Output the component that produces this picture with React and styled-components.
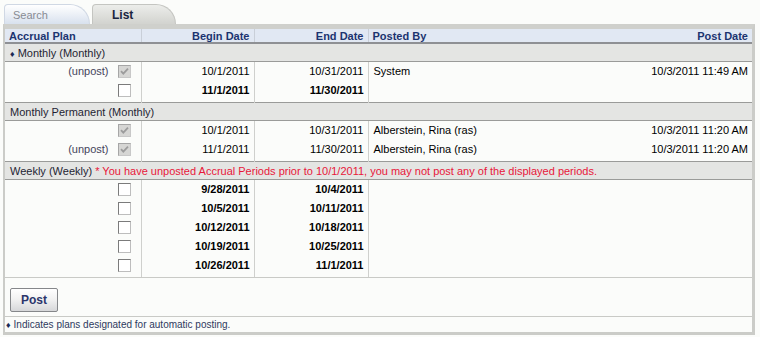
import React from "react";
import styled, { createGlobalStyle } from "styled-components";

const Global = createGlobalStyle`
  html, body { margin: 0; padding: 0; background: #fbfcfa; }
  body { font-family: "Liberation Sans", Arial, sans-serif; font-size: 11px; color: #000; }
`;

const Page = styled.div`
  width: 760px;
  height: 337px;
  padding: 4px 5px 0 3px;
  box-sizing: border-box;
`;

const TabStrip = styled.div`
  display: flex;
  gap: 2px;
  height: 20px;
  padding-left: 1px;
  align-items: flex-end;
`;

const Tab = styled.div`
  height: 20px;
  box-sizing: border-box;
  width: ${(p) => (p.$active ? "84px" : "86px")};
  border-radius: 4px 20px 0 0 / 4px 20px 0 0;
  display: flex;
  align-items: center;
  font-size: ${(p) => (p.$active ? "12px" : "11px")};
  font-weight: ${(p) => (p.$active ? "bold" : "normal")};
  color: ${(p) => (p.$active ? "#1a2440" : "#878b93")};
  padding-left: ${(p) => (p.$active ? "19px" : "8px")};
  background: ${(p) =>
    p.$active
      ? "linear-gradient(#ecedea, #d2d3cf)"
      : "linear-gradient(#ffffff, #d8e1ee)"};
  border: 1px solid ${(p) => (p.$active ? "#c4c5c1" : "#d0d8e4")};
  border-bottom: none;
`;

const Panel = styled.div`
  border: 2px solid #cbccc8;
  border-top: 5px solid #cfd0cc;
  border-right-width: 3px;
  border-bottom-width: 3px;
  background: #fbfcfa;
`;

const Table = styled.table`
  width: 100%;
  border-collapse: collapse;
  table-layout: fixed;
`;

const Head = styled.th`
  height: 13px;
  padding: 0 ${(p) => (p.$align === "right" ? "4px" : "0")} 0 ${(p) => (p.$align === "right" ? "0" : "4px")};
  background: #e1e8f3;
  color: #1b3470;
  font-weight: bold;
  font-size: 11px;
  text-align: ${(p) => p.$align || "left"};
  border-bottom: 2px solid #8e9094;
  border-left: ${(p) => (p.$divider ? "1px solid #c9cfd8" : "none")};
  white-space: nowrap;
`;

const GroupCell = styled.td`
  height: 17px;
  padding: 0 0 0 5px;
  background: #e4e5e3;
  border-top: 1px solid #9a9b99;
  border-bottom: 1px solid #9a9b99;
  color: #1f1f33;
  white-space: nowrap;
`;

const Warn = styled.span`
  color: #e8173a;
`;

const Cell = styled.td`
  height: 18px;
  padding: 0 ${(p) => (p.$align === "right" ? "4px" : "0")} 1px ${(p) => (p.$align === "right" ? "0" : "5px")};
  text-align: ${(p) => p.$align || "left"};
  font-weight: ${(p) => (p.$bold ? "bold" : "normal")};
  border-right: ${(p) => (p.$divider ? "1px solid #cfd0cd" : "none")};
  white-space: nowrap;
  vertical-align: middle;
  line-height: 13px;
`;

const PlanCell = styled(Cell)`
  padding-right: 10px;
`;

const PlanInner = styled.div`
  display: flex;
  justify-content: flex-end;
  align-items: center;
  gap: 9px;
`;

const Unpost = styled.span`
  color: #45455a;
`;

const Box = styled.span`
  display: inline-flex;
  align-items: center;
  justify-content: center;
  width: 13px;
  height: 13px;
  box-sizing: border-box;
  border: 1px solid ${(p) => (p.$disabled ? "#a6a6a6" : "#7b7b7b")};
  border-right-color: ${(p) => (p.$disabled ? "#c8c8c8" : "#bdbdbd")};
  border-bottom-color: ${(p) => (p.$disabled ? "#c8c8c8" : "#bdbdbd")};
  background: ${(p) => (p.$disabled ? "#d6d6d4" : "#ffffff")};
`;

const SpacerRow = styled.td`
  height: 2px;
  padding: 0;
  border-right: ${(p) => (p.$divider ? "1px solid #cfd0cd" : "none")};
`;

const ActionBar = styled.div`
  border-top: 1px solid #c9cac6;
  border-bottom: 1px solid #c9cac6;
  height: 40px;
  box-sizing: border-box;
  padding: 10px 0 0 5px;
`;

const Button = styled.button`
  width: 48px;
  height: 24px;
  border: 1px solid #85878a;
  border-radius: 2px;
  background: linear-gradient(#ffffff 0%, #f2f2f2 45%, #d6d7d9 100%);
  color: #2b356b;
  font-family: "Liberation Sans", Arial, sans-serif;
  font-weight: bold;
  font-size: 12px;
  padding: 0;
  cursor: pointer;
`;

const Footer = styled.div`
  height: 15px;
  padding-left: 1px;
  display: flex;
  align-items: center;
  font-size: 10px;
  color: #2e3a5e;
  gap: 3px;
`;

const Diamond = styled.span`
  color: #1c2a55;
  font-size: 9px;
`;

function Check({ checked, disabled }) {
  return (
    <Box $disabled={disabled}>
      {checked && (
        <svg width="9" height="9" viewBox="0 0 9 9">
          <path d="M1 4.2 L3.3 6.6 L8 1.6" fill="none" stroke="#9c9c9c" strokeWidth="1.8" />
        </svg>
      )}
    </Box>
  );
}

const groups = [
  {
    label: (
      <>
        <Diamond>♦</Diamond> Monthly (Monthly)
      </>
    ),
    rows: [
      { unpost: true, checked: true, begin: "10/1/2011", end: "10/31/2011", by: "System", date: "10/3/2011 11:49 AM" },
      { begin: "11/1/2011", end: "11/30/2011", bold: true },
    ],
  },
  {
    label: "Monthly Permanent (Monthly)",
    rows: [
      { checked: true, begin: "10/1/2011", end: "10/31/2011", by: "Alberstein, Rina (ras)", date: "10/3/2011 11:20 AM" },
      { unpost: true, checked: true, begin: "11/1/2011", end: "11/30/2011", by: "Alberstein, Rina (ras)", date: "10/3/2011 11:20 AM" },
    ],
  },
  {
    label: (
      <>
        Weekly (Weekly){" "}
        <Warn>* You have unposted Accrual Periods prior to 10/1/2011, you may not post any of the displayed periods.</Warn>
      </>
    ),
    rows: [
      { begin: "9/28/2011", end: "10/4/2011", bold: true },
      { begin: "10/5/2011", end: "10/11/2011", bold: true },
      { begin: "10/12/2011", end: "10/18/2011", bold: true },
      { begin: "10/19/2011", end: "10/25/2011", bold: true },
      { begin: "10/26/2011", end: "11/1/2011", bold: true },
    ],
  },
];

export default function App() {
  return (
    <>
      <Global />
      <Page>
        <TabStrip>
          <Tab>Search</Tab>
          <Tab $active>List</Tab>
        </TabStrip>
        <Panel>
          <Table>
            <colgroup>
              <col style={{ width: 136 }} />
              <col style={{ width: 113 }} />
              <col style={{ width: 114 }} />
              <col style={{ width: 190 }} />
              <col />
            </colgroup>
            <thead>
              <tr>
                <Head>Accrual Plan</Head>
                <Head $align="right" $divider>Begin Date</Head>
                <Head $align="right" $divider>End Date</Head>
                <Head $divider>Posted By</Head>
                <Head $align="right">Post Date</Head>
              </tr>
            </thead>
            <tbody>
              {groups.map((g, gi) => (
                <React.Fragment key={gi}>
                  <tr>
                    <GroupCell colSpan={5}>{g.label}</GroupCell>
                  </tr>
                  {g.rows.map((r, ri) => (
                    <tr key={ri}>
                      <PlanCell $align="right" $divider>
                        <PlanInner>
                          {r.unpost && <Unpost>(unpost)</Unpost>}
                          <Check checked={r.checked} disabled={r.checked} />
                        </PlanInner>
                      </PlanCell>
                      <Cell $align="right" $bold={r.bold} $divider>{r.begin}</Cell>
                      <Cell $align="right" $bold={r.bold} $divider>{r.end}</Cell>
                      <Cell>{r.by}</Cell>
                      <Cell $align="right">{r.date}</Cell>
                    </tr>
                  ))}
                  <tr>
                    <SpacerRow $divider />
                    <SpacerRow $divider />
                    <SpacerRow $divider />
                    <SpacerRow />
                    <SpacerRow />
                  </tr>
                </React.Fragment>
              ))}
            </tbody>
          </Table>
          <ActionBar>
            <Button>Post</Button>
          </ActionBar>
          <Footer>
            <Diamond>♦</Diamond>
            <span>Indicates plans designated for automatic posting.</span>
          </Footer>
        </Panel>
      </Page>
    </>
  );
}
